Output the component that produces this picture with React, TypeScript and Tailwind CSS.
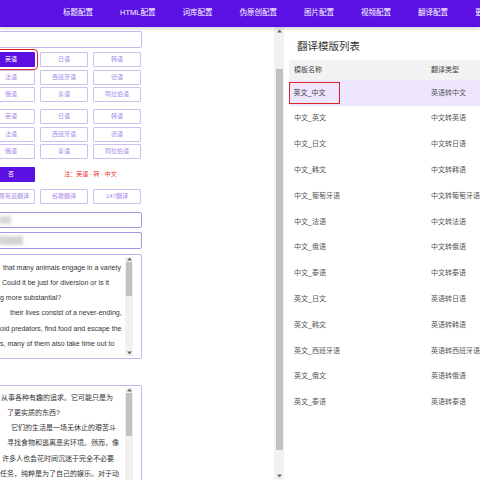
import React from 'react';

// --- static data for the config page ---
const NAV = ['标题配置', 'HTML配置', '词库配置', '伪原创配置', '图片配置', '视频配置', '翻译配置', '更多配置'];

const LANG_ROWS = [
  ['英语', '日语', '韩语'],
  ['法语', '西班牙语', '德语'],
  ['俄语', '泰语', '阿拉伯语'],
];

const TEMPLATES: [string, string][] = [
  ['英文_中文', '英语转中文'],
  ['中文_英文', '中文转英语'],
  ['中文_日文', '中文转日语'],
  ['中文_韩文', '中文转韩语'],
  ['中文_葡萄牙语', '中文转葡萄牙语'],
  ['中文_法语', '中文转法语'],
  ['中文_俄语', '中文转俄语'],
  ['中文_泰语', '中文转泰语'],
  ['英文_日文', '英语转日语'],
  ['英文_韩文', '英语转韩语'],
  ['英文_西班牙语', '英语转西班牙语'],
  ['英文_俄文', '英语转俄语'],
  ['英文_泰语', '英语转泰语'],
];

const EN_LINES: [number, string][] = [
  [3, 'that many animals engage in a variety'],
  [2, 'Could it be just for diversion or is it'],
  [0, 'g more substantial?'],
  [10, 'their lives consist of a never-ending,'],
  [0, 'oid predators, find food and escape the'],
  [0, 's, many of them also take time out to'],
];

const ZH_LINES: [number, string][] = [
  [1, '从事各种有趣的追求。它可能只是为'],
  [7, '了更实质的东西?'],
  [11, '它们的生活是一场无休止的艰苦斗'],
  [7, '寻找食物和逃离恶劣环境。然而，像'],
  [2, '许多人也会花时间沉迷于完全不必要'],
  [0, '任务，纯粹是为了自己的娱乐。对于动'],
];

const FONT = "font-['Liberation_Sans','Noto_Sans_CJK_SC',sans-serif]";

function Arrow({ down }: { down?: boolean }) {
  return (
    <svg width="5" height="4" viewBox="0 0 5 4" className="mx-auto">
      {down ? <path d="M0 0.5 H5 L2.5 3.5 Z" fill="#6b6b6b" /> : <path d="M0 3.5 H5 L2.5 0.5 Z" fill="#6b6b6b" />}
    </svg>
  );
}

function LangBtn({ label, active, marked }: { label: string; active?: boolean; marked?: boolean }) {
  return (
    <div
      className={`h-[15px] flex items-center justify-center text-[6px] rounded-[1px] whitespace-nowrap overflow-hidden ${
        active ? 'bg-[#5b0fe0] text-white' : 'border border-[#cdbff2] text-[#a78ce9]'
      } ${marked ? 'outline-[1.5px] outline-[#e02424] outline-offset-[2px]' : ''}`}
    >
      {label}
    </div>
  );
}

function TextBox({ lines, className, pt, thumb }: { lines: [number, string][]; className: string; pt: string; thumb: string }) {
  return (
    <div className={`relative border-[1.5px] border-[#c4b1f1] rounded-[2px] overflow-hidden ${className}`}>
      <div className={`${pt} pl-[13px] flex flex-col items-start text-[7px] leading-[15.3px] text-[#333]`}>
        {lines.map(([pl, t], i) => (
          <div key={i} className="flex justify-start whitespace-nowrap">
            <span className="shrink-0" style={{ width: pl }} />
            <span>{t}</span>
          </div>
        ))}
      </div>
      {/* inner scrollbar */}
      <div className="absolute right-[8px] top-[2px] bottom-[2px] w-[8px] bg-[#f1f1f1] flex flex-col">
        <Arrow />
        <div className={`mx-auto mt-[1px] w-[6px] bg-[#c1c1c1] ${thumb}`} />
        <div className="mt-auto mb-[1px]">
          <Arrow down />
        </div>
      </div>
    </div>
  );
}

export default function App() {
  return (
    <div className={`w-[480px] h-[480px] overflow-hidden bg-white text-left ${FONT}`}>
      {/* top nav */}
      <header className="h-[27px] bg-[#5b10e4] flex items-center pl-[63px] gap-[27px] shadow-[0_2px_3px_rgba(0,0,0,0.15)] relative z-10">
        {NAV.map((n) => (
          <span key={n} className="text-white text-[7.5px] whitespace-nowrap pb-[2px]">
            {n}
          </span>
        ))}
      </header>

      <main className="flex h-[453px]">
        {/* left settings column */}
        <div className="w-[277px] overflow-hidden">
          <div className="-ml-[14px] w-[156px] pt-[4px]">
            <div className="h-[17px] border border-[#c8b6f2] rounded-[2px]" />

            <div className="mt-[4px] ml-[1px] grid grid-cols-[48px_48px_48px] gap-x-[5px] gap-y-[2.5px]">
              {LANG_ROWS.flat().map((l, i) => (
                <LangBtn key={'a' + i} label={l} active={i === 0} marked={i === 0} />
              ))}
            </div>

            <div className="mt-[7px] ml-[1px] grid grid-cols-[48px_48px_48px] gap-x-[5px] gap-y-[2.5px]">
              {LANG_ROWS.flat().map((l, i) => (
                <LangBtn key={'b' + i} label={l} />
              ))}
            </div>

            <div className="mt-[7.5px] ml-[1px] grid grid-cols-[48px_101px] gap-x-[5px] items-center">
              <LangBtn label="否" active />
              <div className="text-center text-[6px] text-[#f02d2d]">注：英语 - 转 - 中文</div>
            </div>

            <div className="mt-[7px] ml-[1px] grid grid-cols-[48px_48px_48px] gap-x-[5px]">
              <LangBtn label="网易有道翻译" />
              <LangBtn label="谷歌翻译" />
              <LangBtn label="147翻译" />
            </div>

            <div className="mt-[8px] h-[16px] border-[1.5px] border-[#ab93e8] rounded-[2px] flex items-center pl-[12px]">
              <div className="w-[12px] h-[8px] bg-[#d8d8d8] blur-[1.5px]" />
            </div>
            <div className="mt-[4px] h-[17px] border-[1.5px] border-[#ab93e8] rounded-[2px] flex items-center pl-[12px]">
              <div className="w-[24px] h-[9px] bg-[#d4d4d4] blur-[1.5px]" />
            </div>

            <TextBox lines={EN_LINES} className="mt-[5px] h-[105px]" pt="pt-[5px]" thumb="h-[34px]" />
            <TextBox lines={ZH_LINES} className="mt-[26px] h-[110px]" pt="pt-[4px]" thumb="h-[43px]" />
          </div>
        </div>

        {/* page scrollbar */}
        <div className="w-[10px] bg-[#f1f1f1] flex flex-col pt-[2px]">
          <Arrow />
          <div className="mx-auto mt-[36px] w-[7px] h-[381px] bg-[#c1c1c1]" />
          <div className="mt-auto mb-[2px]">
            <Arrow down />
          </div>
        </div>

        {/* template list */}
        <section className="flex-1 pl-[5px] pt-[13px]">
          <h2 className="pl-[8px] text-[10.5px] leading-[12px] text-[#333]">翻译模版列表</h2>
          <div className="mt-[8px] text-[7px] text-[#555]">
            <div className="h-[20px] bg-[#f2f2f2] flex items-center">
              <div className="w-[142px] pl-[5px] text-[#444]">模板名称</div>
              <div className="whitespace-nowrap text-[#444]">翻译类型</div>
            </div>
            {TEMPLATES.map(([name, type], i) => (
              <div key={name} className={`h-[25.8px] flex items-center ${i === 0 ? 'bg-[#ede6fc]' : ''}`}>
                <div className="w-[142px]">
                  {i === 0 ? (
                    <div className="w-[51px] h-[22px] border-[1.5px] border-[#e02424] flex items-center pl-[3.5px] text-[#444]">
                      {name}
                    </div>
                  ) : (
                    <div className="pl-[5px]">{name}</div>
                  )}
                </div>
                <div className="whitespace-nowrap">{type}</div>
              </div>
            ))}
          </div>
        </section>
      </main>
    </div>
  );
}
